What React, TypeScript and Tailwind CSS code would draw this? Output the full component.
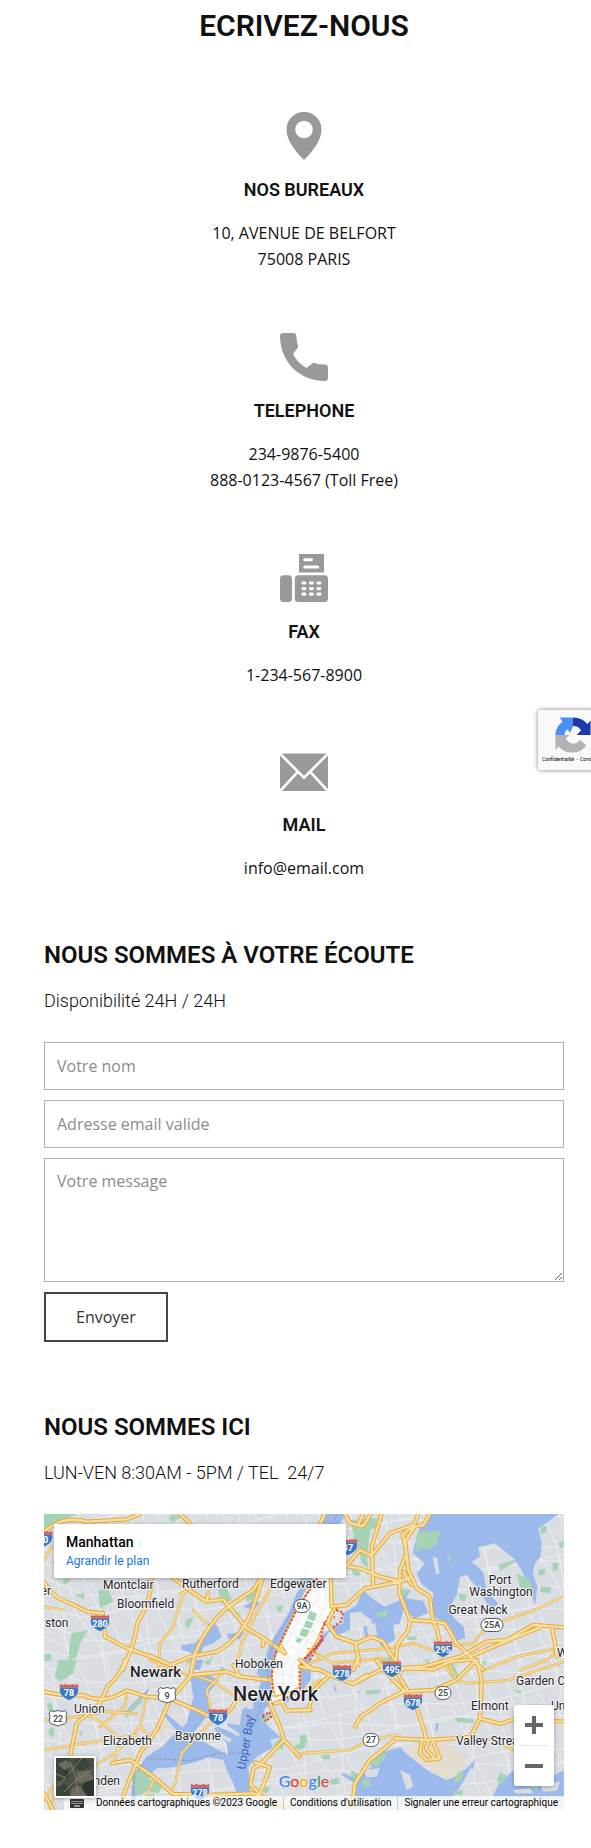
import type { ReactNode } from "react";

const roboto = "font-['Roboto',sans-serif]";

/* ---------- contact icons ---------- */

const PinIcon = () => (
  <svg viewBox="0 0 48 48" className="size-12 fill-[#999999]" aria-hidden="true">
    <path
      fillRule="evenodd"
      d="M24 0C14.2 0 6.5 7.7 6.5 17.4C6.5 28.5 15.5 39.5 24 48C32.5 39.5 41.5 28.5 41.5 17.4C41.5 7.7 33.8 0 24 0ZM24 8.7A8.8 8.8 0 1 1 24 26.3A8.8 8.8 0 1 1 24 8.7Z"
    />
  </svg>
);

const PhoneIcon = () => (
  <svg viewBox="0 0 48 48" className="size-12 fill-[#999999]" aria-hidden="true">
    <path d="M3 0H13.5Q16 0 16.3 2.8Q16.6 8.5 18 13.3Q18.2 14.4 17.4 15.3L13 21Q17.5 30 26.5 35L32.3 30.4Q33.4 29.6 34.6 30Q39 31.5 45 31.6Q48 31.8 48 34.5V44.5Q48 48 44.5 48C19 48 0 28 0 3Q0 0 3 0Z" />
  </svg>
);

const keys = [0, 1, 2].flatMap((r) => [0, 1, 2].map((c) => ({ x: 21.5 + c * 7.5, y: 27.4 + r * 5.6 })));

const FaxIcon = () => (
  <svg viewBox="0 0 48 48" className="size-12 fill-[#999999]" aria-hidden="true">
    <path d="M19 0H44V18.5H19Z" />
    <rect x="0" y="21.2" width="12" height="26.8" rx="3.5" />
    <rect x="14.8" y="21.2" width="33.2" height="26.8" rx="3.5" />
    <g className="fill-white">
      <rect x="23.3" y="4.2" width="9.6" height="3" rx="1.5" />
      <rect x="23.3" y="11.5" width="16" height="3" rx="1.5" />
      {keys.map((k) => (
        <rect key={`${k.x}-${k.y}`} x={k.x} y={k.y} width="4.8" height="3.2" rx="1.4" />
      ))}
    </g>
  </svg>
);

const MailIcon = () => (
  <svg viewBox="0 0 48 46" className="h-[46px] w-12 fill-[#999999]" aria-hidden="true">
    <rect x="0" y="4.5" width="48" height="37.5" rx="2" />
    <path
      className="fill-none stroke-white"
      strokeWidth="2.6"
      d="M0.5 5.200L24 28.700L47.5 5.200M0.5 41.500L17.5 23.200M47.5 41.500L30.5 23.200"
    />
  </svg>
);

/* ---------- map drawing ---------- */

const quads = ["translate(-12 -12)", "translate(768 -12)", "translate(-12 438)", "translate(768 438)"];

const Layer = ({ d, className, width }: { d: string[]; className: string; width?: number }) => (
  <g className={className} strokeWidth={width} strokeLinejoin="round" strokeLinecap="round">
    {d.map((path, i) => (
      <path key={i} d={path} transform={quads[i]} />
    ))}
  </g>
);

const wobble = (n: number) => Math.sin(n * 12.9898) * 0.5 + Math.sin(n * 4.1414) * 0.5;

const streets = (() => {
  let d = "";
  for (let i = 0; i < 46; i++) {
    const x = i * 48 - 280;
    d += `M${x} 0`;
    for (let j = 1; j <= 9; j++) d += `L${Math.round(x + j * 34 + wobble(i * 7 + j) * 36)} ${j * 100}`;
  }
  for (let i = 0; i < 30; i++) {
    const y = i * 44 - 160;
    d += `M0 ${y}`;
    for (let j = 1; j <= 13; j++) d += `L${j * 122} ${Math.round(y - j * 14 + wobble(i * 5 + j * 3) * 34 + 60)}`;
  }
  return d;
})();

const water = [
  "M800 206L770 250L750 300L725 345L690 400L664 480H700L712 425L760 350L812 255V206ZM425 405L465 400L500 365L505 340L530 345L545 380L520 400L490 412L480 440L445 425L425 420ZM560 372L612 365L600 388L565 388ZM610 290L640 270L660 280L640 300ZM20 340L60 330L62 336L22 346Z",
  "M395 12H775L745 35L715 55L725 100L722 140L705 160L698 190L712 230L706 285L690 250L665 180L640 145L585 100L535 112L540 140L515 155L550 185L560 245L595 280L575 300L555 270L525 225L500 195L480 200L470 255L445 300L468 330L492 350L495 385L470 392L445 345L405 322L395 300L400 250L365 222L350 190L375 160L338 130L350 80L362 45ZM0 204H40L28 245L0 290ZM75 12H140L118 42H60ZM160 80L185 60L175 85L160 100ZM130 310L170 285L190 240L215 265L255 290L300 270L298 240L332 240L318 265L370 272L385 310L345 325L310 300L300 340L280 345L285 390L245 410L225 380L195 385L190 350L215 345L215 330L180 305L150 310L150 360L115 375L88 365L65 400L20 460H0V470L60 380L100 350L130 340Z",
  "M664 0H690L700 60L702 120L672 150L680 195L722 232L690 240L700 262L650 290L625 320L632 400L592 405L580 370L560 330L550 300L505 292L470 305L400 322L350 325L300 372L285 425L272 420L278 350L320 290L350 270L385 250L440 240L490 245L565 285L560 250L520 205L535 200L570 215L560 190L600 195L605 150L640 130L665 60L650 40ZM465 40L500 38L535 62L505 100L512 150L480 195L450 230L410 258L350 280L385 240L440 190L460 110L452 60ZM365 148L430 205L418 222L370 165ZM470 0H490L480 30H462ZM788 0H812V60L790 85L760 100L745 125L712 135L720 118L770 80ZM250 160L330 80L322 100L262 165Z",
  "M0 0H20L30 50L10 90L0 100ZM250 275L300 262L330 290L370 322L395 338L440 360L465 350L500 325L525 300L470 400L455 412H158L165 370L125 345L130 338L170 358L215 320L205 300ZM578 410L600 365L620 350L640 330L645 372L700 380L740 360L792 330V410ZM408 190L416 188L414 212L406 214ZM100 70L112 92L104 94ZM510 320L525 295L520 330Z",
];

const islands = [
  "",
  "M398 140L412 145L418 190L408 192ZM200 345L225 340L232 375L205 380ZM150 312L180 308L205 325L175 345L152 330Z",
  "M535 215L575 238L570 248L535 228ZM560 195L600 222L596 230L558 208ZM620 135L640 130L638 148L622 146Z",
  "M190 330L240 325L230 350L200 352ZM300 330L330 345L340 380L320 390ZM640 390L690 385L700 400H645ZM720 372L780 365L770 392L730 395Z",
];

const parks = [
  "M12 12H110L60 35L12 66ZM395 12L425 20L400 36L385 25ZM175 240L205 235L220 275L180 295ZM70 208L90 205L85 220L68 222ZM105 255L135 248L130 268ZM95 370L145 360L120 400L110 440L85 455L88 410ZM12 435L30 430L35 450L15 455ZM435 330L460 320L450 350L438 355ZM620 245L655 235L650 265L620 275ZM560 295L575 290L570 310ZM710 290L728 285L725 305H712ZM530 220L560 230L575 270L545 285ZM580 300L600 310L590 318ZM490 458L520 440L510 465Z",
  "M150 30L230 25L232 50L210 60L205 110L200 130L205 175L185 160ZM355 65L420 62L415 95L390 120L370 115L345 130L350 90ZM720 45L742 50L738 68L722 72ZM758 158L775 158L772 182L758 182ZM715 180L735 178V196H716ZM722 230L755 232L750 250L722 246ZM595 165L640 150L650 155L600 182ZM650 190L690 210L700 255L660 230ZM475 250L500 255L495 275L480 270ZM442 132L452 140L445 162ZM775 100L792 92V108L780 115ZM155 178L185 185L175 200L158 195ZM298 235L325 240L310 265ZM230 310L262 300L260 320H232ZM545 455L560 450L555 470ZM320 380H350V390H322ZM365 450L390 448L385 458Z",
  "M55 0H110L100 40L60 65L45 50ZM20 130L35 130L40 155L28 160ZM255 160L300 115L310 122L270 160L258 175ZM30 200L45 208L40 235L25 220ZM440 0H455L440 20ZM285 340L310 325L330 350L325 390L300 408L282 395ZM320 355L370 372L355 400L325 395ZM690 165L660 180L672 190ZM670 385L690 378L688 392L675 402ZM540 20L555 25L545 45ZM508 405L530 395L525 410ZM760 260L790 245L800 262L775 270ZM310 410L345 400L330 435ZM118 208L128 222L120 228ZM720 232L735 240L728 270L700 255Z",
  "M225 10L290 -20L305 20L275 45ZM0 225L20 225L22 245L0 260ZM195 93L243 88L240 100L200 105ZM170 92L182 95L178 103ZM465 172L520 178L522 190L470 186ZM575 240H605V250H578ZM205 300L245 278L262 285L235 318L208 312ZM155 330L180 345L175 360L152 350ZM90 360L115 352L118 372L95 375ZM65 285H90V298H68ZM475 335L490 330L485 362L460 368ZM185 362L205 358L215 378L190 380ZM600 338L620 348L606 375L590 360ZM640 90L668 92L660 102ZM440 20L460 10L478 50L455 55ZM688 378L720 372L710 392ZM450 395L490 390L485 408Z",
];

const airports = [
  "M660 255L690 250L700 275L670 285Z",
  "M205 268L222 270L220 290L205 285ZM275 372L300 362L300 385L282 388ZM195 350L230 362L228 385L200 375Z",
  "M350 210L385 170L395 185L360 232Z",
  "M322 275L338 250L385 250L440 250L498 288L490 330L445 358L400 332L345 300Z",
];

const majorRoads = [
  "M12 215Q40 268 100 283Q140 312 188 308L195 380L262 415L340 442L392 465L450 440L530 425Q610 380 640 290L668 205M335 205Q335 270 292 340Q285 400 248 480M395 200L440 235L500 275L550 268L620 355L672 385L735 430M455 480L465 430Q500 345 565 290L640 240L662 205M12 65Q70 15 140 35L260 28L300 12M420 12L455 45M500 275L505 250M672 385L668 408M735 430L722 408",
  "M75 12L60 42M135 12L150 40L190 48L212 12M245 12L215 110L220 230M190 12L175 42M220 130L270 70L340 45M355 12L340 50L308 72L320 130L300 180L298 250L330 330L325 360L292 405L285 480M390 12L370 45L345 50L315 95L325 180L350 235L390 260L398 330L412 360L420 400M138 168L180 175L240 200L300 215L335 200M92 205L95 290L140 285L195 235L300 215M335 330L400 335L435 340L470 400L510 440L550 480M100 300L82 340L110 380L170 400L215 380L250 395L270 430L308 480M165 400L175 440L160 480M138 168L180 120L215 138M310 185L335 225M0 450L40 480M285 475L370 470L480 440L560 395L620 390L700 345L792 352M510 440L580 410L640 385L720 352M755 350L765 400L770 440",
  "M12 95Q70 110 130 105Q190 135 260 92L320 110L385 115L470 150L530 180M255 0Q240 50 205 75L180 130L110 190L90 290M460 0L450 50L390 120L350 210L300 280L260 380L235 450M215 310L270 300L340 350L400 402L520 405L640 400L750 448M455 45L560 35L600 50L690 60M690 130L720 200L732 240L778 290M812 150L740 152L725 125L705 130M732 240L665 310L640 325L632 375L660 402L690 322L645 308M530 180L575 145L600 100M40 450L12 400M600 50L580 15",
  "M0 20L60 30L100 50L160 72L240 30L330 25L400 28L450 5L520 -2M0 150L25 150L42 90L90 45M230 0L262 42L312 92M285 30L325 95M175 -10V15M165 200L182 170L240 130L310 95L400 90L470 60L530 0M340 110L375 220L378 240M530 0L545 60L540 175L600 192L640 178L792 185M540 175L512 230L460 235L380 240L290 235L210 300L165 370L155 450M365 245L360 280L380 300L420 295L405 260L398 240M385 245L378 265L400 292M160 70L200 45",
];

const minorRoads = [
  "M445 215Q410 300 400 350L360 400L355 480M708 205L650 310L605 400L588 480M12 150L35 110M455 240L420 250M12 290L70 300M500 340L460 300",
  "M20 465L100 430L260 415L340 400L400 422M440 410L520 400L560 350L690 305L792 260M560 478L650 440L760 418M765 430L740 450L660 480M40 430L100 460L250 445",
  "M12 270L130 250L290 225M12 180L100 172L200 155L290 160M130 160L190 190L240 240L225 300M320 110L300 200L225 280L160 320M262 92L255 140L180 200M545 40L500 90L520 180L485 215L425 280L405 370L390 400M330 0L380 20L440 45M450 40L530 70L600 120M90 290L60 350L30 450M12 420L60 350M300 200L335 235M345 350L320 410L300 450",
  "M0 280L150 270L210 240L290 225M440 0L470 60L500 70L620 62L792 5M420 -10L450 40M0 100L60 60M480 235L560 235L640 270",
];

const borders = [
  "M812 240L740 330L700 400L678 480",
  "M110 12L95 60",
  "M678 0L685 60L660 140L640 200M600 280L530 280L450 302L320 295L285 340L278 440",
  "",
];

/* The highlighted borough, drawn over the surrounding terrain. */
const Borough = () => (
  <g transform="translate(528 138)" className="fill-none" strokeLinejoin="round" strokeLinecap="round">
    <path
      className="fill-[#fbfbfb]"
      d="M288 40H330L332 120L352 155L328 190L308 205L300 240L250 300L238 330L243 385L200 412L150 432L155 360L162 300L178 262L212 190L235 130Z"
    />
    <path
      className="stroke-[#e4e6ea]"
      strokeWidth="2"
      d="M250 120L318 150M235 150L312 190M222 180L300 225M205 215L285 255M190 245L262 285M178 270L245 308M168 300L238 330M160 335L240 355M158 365L240 380M285 70L255 140L200 250L175 310L165 400M315 60L318 130L290 190L235 290L215 330L205 400M300 70L290 130M210 290L190 330L185 400"
    />
    <path className="fill-[#a3d4b3]" d="M270 152L291 162L282 184L261 176ZM259 180L281 190L272 206L251 200ZM246 204L270 212L258 232L238 226ZM232 232L249 238L238 250L226 245Z" />
    <path className="fill-[#a3d4b3]" d="M128 470L148 458L154 470L140 482Z" />
    <path
      className="stroke-[#efb945]"
      strokeWidth="5"
      d="M270 85L230 145L195 220L165 290L155 350L160 385L165 410L200 400L240 380L242 330L250 300L290 245L308 200L325 180M262 265L300 285M335 60L338 130L355 150"
    />
    <path
      className="stroke-[#ea4335]"
      strokeWidth="6"
      strokeLinecap="butt"
      strokeDasharray="6 6"
      d="M292 55L262 100L228 155L192 225L165 282L155 345L158 390L150 435L205 410L240 385L238 330L246 300L262 290L300 245L308 205L325 170L350 152L370 158L362 185L335 205L320 195M332 55L332 120L350 150M256 296L310 238M270 300L312 226M128 468L148 456L154 470L138 484ZM80 466L90 470M310 190L345 170"
    />
  </g>
);

const Interstate = ({ x, y, n }: { x: number; y: number; n: string }) => (
  <g transform={`translate(${x} ${y})`}>
    <path className="fill-[#3b78c3] stroke-white" strokeWidth="0.5" d="M-9 -5H9C11 1 8 5 0 8.5C-8 5 -11 1 -9 -5Z" />
    <path className="fill-[#d9605c]" d="M-9.5 -4.5L-9 -8L-6 -7L-4 -8L0 -7L4 -8L6 -7L9 -8L9.5 -4.5Z" />
    <text y="4" textAnchor="middle" className="fill-white text-[9px] font-bold">
      {n}
    </text>
  </g>
);

const RouteSign = ({ x, y, n, w = 16 }: { x: number; y: number; n: string; w?: number }) => (
  <g transform={`translate(${x} ${y})`}>
    <rect x={-w / 2} y="-6.5" width={w} height="13" rx="6.5" className="fill-white stroke-[#555b63]" />
    <text y="3" textAnchor="middle" className="fill-[#3c4043] text-[9px] font-medium">
      {n}
    </text>
  </g>
);

const UsRoute = ({ x, y, n }: { x: number; y: number; n: string }) => (
  <g transform={`translate(${x} ${y})`}>
    <path
      className="fill-white stroke-[#555b63]"
      d="M-7 -7.5L-4 -6.5L0 -7.5L4 -6.5L7 -7.5L9 -4.5Q7 -2 8.5 1Q9.5 6 4 6.5L0 8L-4 6.5Q-9.5 6 -8.5 1Q-7 -2 -9 -4.5Z"
    />
    <text y="3.5" textAnchor="middle" className="fill-[#3c4043] text-[9px] font-medium">
      {n}
    </text>
  </g>
);

const towns: { x: number; y: number; name: string; anchor?: "start" | "middle" | "end" }[] = [
  { x: 59, y: 75, name: "Montclair" },
  { x: 73, y: 94, name: "Bloomfield" },
  { x: 138, y: 74, name: "Rutherford" },
  { x: 226, y: 74, name: "Edgewater" },
  { x: 1, y: 113, name: "ston" },
  { x: 7, y: 81, name: "er", anchor: "end" },
  { x: 191, y: 154, name: "Hoboken" },
  { x: 30, y: 199, name: "Union" },
  { x: 59, y: 231, name: "Elizabeth" },
  { x: 131, y: 226, name: "Bayonne" },
  { x: 76, y: 271, name: "Linden", anchor: "end" },
  { x: 456, y: 70, name: "Port", anchor: "middle" },
  { x: 457, y: 82, name: "Washington", anchor: "middle" },
  { x: 434, y: 100, name: "Great Neck", anchor: "middle" },
  { x: 513, y: 143, name: "W" },
  { x: 472, y: 171, name: "Garden City" },
  { x: 427, y: 196, name: "Elmont" },
  { x: 507, y: 196, name: "Uniondale" },
  { x: 412, y: 231, name: "Valley Stream" },
];

const MapDrawing = () => (
  <svg
    viewBox="0 0 520 296"
    preserveAspectRatio="xMidYMid slice"
    className={`block h-full w-full ${roboto}`}
    role="img"
    aria-label="Manhattan"
  >
    <rect width="520" height="296" className="fill-[#dadde2]" />
    <g transform="scale(0.33333)">
      <path d={streets} className="fill-none stroke-[#eceef1]" strokeWidth="3" />
      <Layer d={airports} className="fill-[#e3dccf]" />
      <Layer d={water} className="fill-[#9cb9ec]" />
      <Layer d={islands} className="fill-[#dadde2]" />
      <Layer d={parks} className="fill-[#a6d3b6]" />
      <Borough />
      <Layer d={minorRoads} className="fill-none stroke-[#ebb13c]" width={8} />
      <Layer d={minorRoads} className="fill-none stroke-[#f5dfa8]" width={4} />
      <Layer d={majorRoads} className="fill-none stroke-[#e9ab2f]" width={13} />
      <Layer d={majorRoads} className="fill-none stroke-[#f5dfa8]" width={7} />
      <g strokeDasharray="8 6">
        <Layer d={borders} className="fill-none stroke-[#8490a8]" width={2} />
      </g>
    </g>
    <Interstate x={304} y={33} n="87" />
    <Interstate x={-1} y={25} n="80" />
    <Interstate x={56} y={109} n="280" />
    <Interstate x={399} y={135} n="295" />
    <Interstate x={348} y={155} n="495" />
    <Interstate x={298} y={159} n="278" />
    <Interstate x={369} y={188} n="678" />
    <Interstate x={25} y={178} n="78" />
    <Interstate x={174} y={203} n="78" />
    <Interstate x={156} y={278} n="278" />
    <UsRoute x={123} y={181} n="9" />
    <UsRoute x={14} y={204} n="22" />
    <RouteSign x={258} y={92} n="9A" />
    <RouteSign x={448} y={111} n="25A" w={22} />
    <RouteSign x={399} y={179} n="25" />
    <RouteSign x={327} y={226} n="27" />
    <g className="fill-[#1f2328] stroke-[#f4f5f7] [paint-order:stroke]" strokeWidth="2" strokeLinejoin="round">
      {towns.map((t) => (
        <text key={t.name} x={t.x} y={t.y} textAnchor={t.anchor} className="text-xs">
          {t.name}
        </text>
      ))}
      <text x="86" y="163" className="text-[15px] font-medium">
        Newark
      </text>
      <text x="189" y="187" className="text-xl font-medium">
        New York
      </text>
    </g>
    <text transform="translate(201 256) rotate(-80)" className="fill-[#3569b8] text-xs">
      Upper Bay
    </text>
  </svg>
);

const SatelliteThumb = () => (
  <svg viewBox="0 0 38 38" className="block size-full" aria-hidden="true">
    <rect width="38" height="38" className="fill-[#4c5046]" />
    <path className="fill-[#39443a]" d="M0 0H14L10 8L14 16L6 24L0 22ZM18 2L30 0L34 8L26 14L19 9ZM0 30L10 26L14 38H0Z" />
    <path className="fill-[#6d695c]" d="M20 14L32 12L38 20L30 26L22 24ZM16 30L24 28L30 38H14ZM2 6L10 2L16 8L8 12Z" />
    <path className="fill-[#2d352f]" d="M28 24L38 22V38H32L26 30ZM8 12L14 16L10 22Z" />
    <path className="fill-none stroke-[#83806f]" strokeWidth="1" d="M2 28L14 14L26 0M8 34L20 22L36 12M14 4L20 20L22 38M0 16L10 20" />
  </svg>
);

const KeyboardIcon = () => (
  <svg viewBox="0 0 14 9" className="h-[9px] w-[14px]" aria-hidden="true">
    <rect width="14" height="9" rx="1" className="fill-[#333333]" />
    <path className="stroke-white" strokeWidth="1" strokeDasharray="1 1" d="M1.5 2.5H13M1.5 4.5H13" />
    <path className="stroke-white" strokeWidth="1" d="M4 7H10" />
  </svg>
);

const GoogleLogo = () => (
  <a href="#google" aria-label="Google" className="font-['Lato',sans-serif] text-base leading-5 font-medium">
    <span className="text-[#4285f4]">G</span>
    <span className="text-[#ea4335]">o</span>
    <span className="text-[#fbbc05]">o</span>
    <span className="text-[#4285f4]">g</span>
    <span className="text-[#34a853]">l</span>
    <span className="text-[#ea4335]">e</span>
  </a>
);

const MapPanel = () => (
  <div className={`relative h-[296px] w-full overflow-hidden font-normal ${roboto}`}>
    <MapDrawing />
    <div className="absolute top-[10px] left-[10px] h-[54px] w-[292px] max-w-[90%] rounded-xs bg-white py-2 pl-3 shadow-[0_1px_4px_rgba(0,0,0,0.3)]">
      <div className="text-sm leading-5 font-medium text-black">Manhattan</div>
      <a href="#plan" className="block text-xs leading-[18px] text-[#1a73e8]">
        Agrandir le plan
      </a>
    </div>
    <div className="absolute right-[10px] bottom-6 flex w-10 flex-col items-center rounded-xs bg-white shadow-[0_1px_4px_rgba(0,0,0,0.3)]">
      <button type="button" aria-label="Zoom avant" className="flex size-10 items-center justify-center">
        <svg viewBox="0 0 18 18" className="size-[18px] fill-[#666666]">
          <path d="M7 0H11V7H18V11H11V18H7V11H0V7H7Z" />
        </svg>
      </button>
      <div className="h-px w-[30px] bg-[#e6e6e6]" />
      <button type="button" aria-label="Zoom arrière" className="flex size-10 items-center justify-center">
        <svg viewBox="0 0 18 18" className="size-[18px] fill-[#666666]">
          <path d="M0 7H18V11H0Z" />
        </svg>
      </button>
    </div>
    <div className="absolute bottom-4 left-1/2 -translate-x-1/2">
      <GoogleLogo />
    </div>
    <div className="absolute right-0 bottom-0 flex h-[14px] items-center text-[10px] leading-[14px] whitespace-nowrap text-black">
      <button type="button" aria-label="Raccourcis clavier" className="flex h-full items-center bg-white/70 px-[6px]">
        <KeyboardIcon />
      </button>
      <span className="bg-white/70 px-[6px]">Données cartographiques ©2023 Google</span>
      <a href="#conditions" className="border-l border-[#c5cad3] bg-white/70 px-[6px]">
        Conditions d'utilisation
      </a>
      <a href="#erreur" className="border-l border-[#c5cad3] bg-white/70 px-[6px]">
        Signaler une erreur cartographique
      </a>
    </div>
    <button
      type="button"
      aria-label="Afficher les images satellite"
      className="absolute bottom-3 left-[10px] size-[42px] rounded-xs border-2 border-white shadow-[0_1px_4px_rgba(0,0,0,0.3)]"
    >
      <SatelliteThumb />
    </button>
  </div>
);

/* ---------- page ---------- */

const Contact = ({ icon, title, children }: { icon: ReactNode; title: string; children: ReactNode }) => (
  <section className="flex flex-col items-center gap-[18px] text-center">
    {icon}
    <h2 className={`${roboto} text-lg leading-6 font-semibold`}>{title}</h2>
    <p className="leading-[26px]">{children}</p>
  </section>
);

const SectionHead = ({ title, sub }: { title: string; sub: string }) => (
  <header className={`${roboto} mb-[27px] flex flex-col gap-4`}>
    <h2 className="text-2xl leading-8 font-semibold">{title}</h2>
    <p className="text-lg leading-7 font-light whitespace-pre-wrap">{sub}</p>
  </header>
);

const fieldClass =
  "block w-full border border-[#b2b2b2] bg-white px-3 text-[#111111] placeholder:text-[#8c8c8c] focus:outline-none";

const RecaptchaBadge = () => (
  <aside className="absolute top-[710px] left-full -ml-[53px] h-[60px] w-[256px] rounded-xs bg-[#f9f9f9] shadow-[0_0_5px_#808080]">
    <div className="flex w-[70px] flex-col items-center pt-[6px]">
      <svg viewBox="0 0 40 40" className="size-[38px]" aria-hidden="true">
        <path className="fill-[#1c3aa9]" d="M20 1.5Q30 1.5 35 8.5L38.5 5V20H24L28.5 15Q26 10.5 20 10.5Z" />
        <path className="fill-[#4a90f5]" d="M20 1.5H6L9 6Q1.5 11 1.5 20H11Q11 16.5 14 14L17 17.5L20 11Z" />
        <path className="fill-[#b3b3b3]" d="M1.5 20V35.5L5 32Q11 39 20 38.5Q29 38 34 31L27.5 25Q24 30 19 29Q15 28 12.5 24L16 20Z" />
      </svg>
      <p className={`${roboto} w-[62px] self-start pl-1 text-[5px] leading-[10px] font-normal whitespace-nowrap text-black`}>
        <a href="#confidentialite">Confidentialité</a> <span className="px-px">-</span>{" "}
        <a href="#conditions-recaptcha">Conditions</a>
      </p>
    </div>
  </aside>
);

export default function App() {
  return (
    <div className="relative overflow-hidden bg-white font-['Open_Sans',sans-serif] text-base font-normal text-[#111111]">
      <main className="pt-[6px] pr-[27px] pb-[38px] pl-11">
        <h1 className={`${roboto} text-center text-3xl leading-10 font-semibold`}>ECRIVEZ-NOUS</h1>

        <div className="mt-[66px] flex flex-col gap-[61px]">
          <Contact icon={<PinIcon />} title="NOS BUREAUX">
            10, AVENUE DE BELFORT
            <br />
            75008 PARIS
          </Contact>
          <Contact icon={<PhoneIcon />} title="TELEPHONE">
            234-9876-5400
            <br />
            888-0123-4567 (Toll Free)
          </Contact>
          <Contact icon={<FaxIcon />} title="FAX">
            1-234-567-8900
          </Contact>
          <Contact icon={<MailIcon />} title="MAIL">
            info@email.com
          </Contact>
        </div>

        <section className="mt-[58px]">
          <SectionHead title="NOUS SOMMES À VOTRE ÉCOUTE" sub="Disponibilité 24H / 24H" />
          <form className="flex flex-col items-start gap-[10px]" onSubmit={(e) => e.preventDefault()}>
            <input type="text" aria-label="Votre nom" placeholder="Votre nom" className={`${fieldClass} h-12`} />
            <input
              type="email"
              aria-label="Adresse email valide"
              placeholder="Adresse email valide"
              className={`${fieldClass} h-12`}
            />
            <textarea
              aria-label="Votre message"
              placeholder="Votre message"
              className={`${fieldClass} h-[124px] resize py-[9px] leading-[26px]`}
            />
            <button type="submit" className="h-[50px] border-2 border-[#444444] bg-white px-[30px] text-[#333333]">
              Envoyer
            </button>
          </form>
        </section>

        <section className="mt-[69px]">
          <SectionHead title="NOUS SOMMES ICI" sub="LUN-VEN 8:30AM - 5PM / TEL  24/7" />
          <MapPanel />
        </section>
      </main>
      <RecaptchaBadge />
    </div>
  );
}
